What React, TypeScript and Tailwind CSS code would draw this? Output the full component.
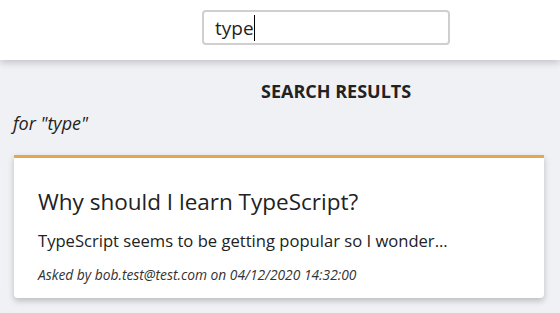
import React from 'react';

interface Question {
  id: number;
  title: string;
  content: string;
  userName: string;
  created: string;
}

const results: Question[] = [
  {
    id: 1,
    title: 'Why should I learn TypeScript?',
    content: 'TypeScript seems to be getting popular so I wonder...',
    userName: 'bob.test@test.com',
    created: '04/12/2020 14:32:00',
  },
];

const font = "font-['Open_Sans','Noto_Sans',sans-serif]";

function Header({ search }: { search: string }) {
  return (
    <header className="relative z-10 h-[60px] bg-white shadow-[0_3px_7px_rgba(0,0,0,0.18)] pl-[202px] pt-[10px]">
      <div className="flex h-[35px] w-[248px] items-center rounded-[4px] border-2 border-[#cfcfcf] bg-white pl-[11px] text-[19px] text-[#1f1f1f]">
        <span className="leading-[26px]">{search}</span>
        <span className="inline-block h-[26px] w-[1px] bg-black" />
      </div>
    </header>
  );
}

function QuestionCard({ q }: { q: Question }) {
  return (
    <div className="ml-[14px] mr-[16px] rounded-b-[4px] border-t-[3px] border-[#e2a751] bg-white pb-[14px] pl-[24px] pt-[30px] shadow-[0_3px_6px_rgba(0,0,0,0.22)]">
      <div className="text-[22.5px] leading-[28px] text-[#222]">{q.title}</div>
      <div className="mt-[14px] text-[16.6px] leading-[22px] text-[#222]">{q.content}</div>
      <div className="mt-[14px] text-[13.8px] italic leading-[18px] text-[#333]">
        Asked by {q.userName} on {q.created}
      </div>
    </div>
  );
}

export default function App() {
  const search = 'type';
  return (
    <div className={`${font} min-h-[313px] bg-[#f0f1f5]`}>
      <Header search={search} />
      <main className="pt-[20px]">
        <h2 className="pl-[261px] text-[18px] font-bold leading-[22px] text-[#222]">SEARCH RESULTS</h2>
        <p className="mt-[10px] pl-[13px] text-[18px] italic leading-[22px] text-[#222]">for "{search}"</p>
        <div className="mt-[21px]">
          {results.map(q => (
            <QuestionCard key={q.id} q={q} />
          ))}
        </div>
      </main>
    </div>
  );
}
